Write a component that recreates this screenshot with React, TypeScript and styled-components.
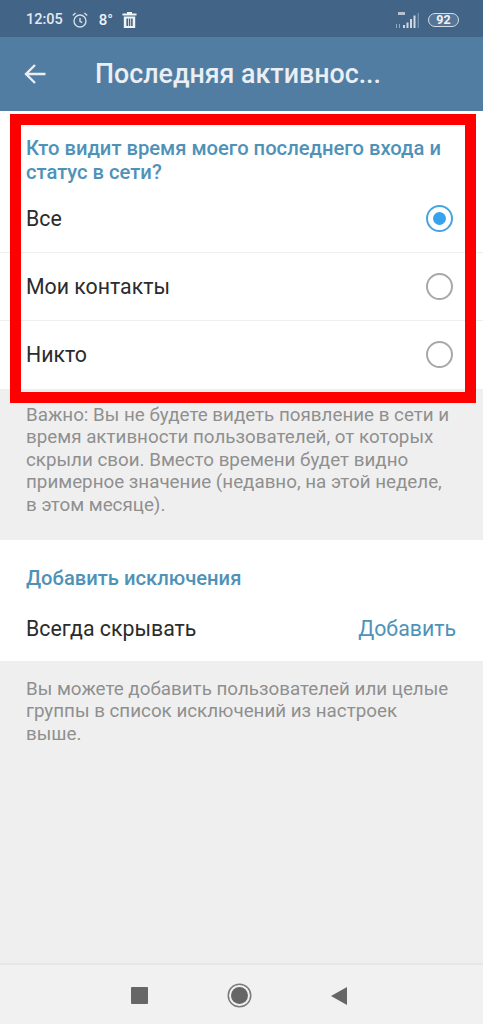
import { createGlobalStyle, styled } from "styled-components";

const GlobalStyle = createGlobalStyle`
  * { box-sizing: border-box; }
  html, body { margin: 0; padding: 0; background: #efefef; }
  body { font-family: Roboto, "Noto Sans", sans-serif; }
`;

const options = [
  { label: "Все", checked: true },
  { label: "Мои контакты", checked: false },
  { label: "Никто", checked: false },
];

const App = () => {
  return (
    <Page>
      <GlobalStyle />
      <StatusBar>
        <StatusGroup>
          <Clock>12:05</Clock>
          <svg width="18" height="18" viewBox="0 0 18 18" fill="none" stroke="#d5dde6" strokeWidth="1.4">
            <circle cx="9" cy="10" r="6" />
            <path d="M9 7v3.4l2.2 1.2M1.8 4.6 4.6 2M16.2 4.6 13.4 2" />
          </svg>
          <Temperature>8°</Temperature>
          <svg width="15" height="16" viewBox="0 0 15 16" fill="#f2f5f8">
            <path d="M5 0h5v1.6h4.5v2H.5v-2H5zM1.8 4.6h11.4V16H1.8zM4.4 6.6v7.4h1.6V6.6zM6.8 6.6v7.4h1.5V6.6zM9.1 6.6v7.4h1.6V6.6z" fillRule="evenodd" />
          </svg>
        </StatusGroup>
        <StatusGroup>
          <svg width="24" height="18" viewBox="0 0 24 18" fill="#cfd8e2">
            <rect x="2" y="1" width="7" height="3" opacity="0.8" />
            <rect x="0" y="13" width="1" height="4" opacity="0.6" />
            <rect x="3" y="13" width="1" height="4" opacity="0.6" />
            <rect x="7" y="14" width="2" height="3" />
            <rect x="10.5" y="11.5" width="2" height="5.5" />
            <rect x="14" y="8" width="2" height="9" />
            <rect x="17.5" y="4.5" width="2" height="12.5" />
            <rect x="21.5" y="2" width="1.5" height="15" opacity="0.35" />
          </svg>
          <Battery>92</Battery>
        </StatusGroup>
      </StatusBar>

      <Header>
        <svg width="22" height="22" viewBox="0 0 22 22" fill="none" stroke="#e8eef4" strokeWidth="2.4">
          <path d="M21.5 11H2M11 2 2 11l9 9" />
        </svg>
        <HeaderTitle>Последняя активнос...</HeaderTitle>
      </Header>

      <HighlightArea>
        <Section>
          <SectionTitle $wrapped>Кто видит время моего последнего входа и статус в сети?</SectionTitle>
          {options.map((option, index) => (
            <OptionRow key={option.label} $divider={index < options.length - 1}>
              <RowLabel>{option.label}</RowLabel>
              <Radio $checked={option.checked} />
            </OptionRow>
          ))}
        </Section>
        <RedFrame />
      </HighlightArea>

      <Note $height={151}>
        Важно: Вы не будете видеть появление в сети и время активности пользователей, от которых скрыли свои. Вместо времени будет видно примерное значение (недавно, на этой неделе, в этом месяце).
      </Note>

      <Section>
        <SectionTitle>Добавить исключения</SectionTitle>
        <ExceptionRow>
          <RowLabel>Всегда скрывать</RowLabel>
          <AddLink>Добавить</AddLink>
        </ExceptionRow>
      </Section>

      <Note $height={120} $top={17}>
        Вы можете добавить пользователей или целые группы в список исключений из настроек выше.
      </Note>

      <Spacer />

      <NavBar>
        <NavSquare />
        <NavCircle />
        <svg width="18" height="20" viewBox="0 0 18 20" fill="#666666">
          <path d="M17 1v18L1 10z" />
        </svg>
      </NavBar>
    </Page>
  );
};

const Page = styled.div`
  width: 483px;
  height: 1024px;
  display: flex;
  flex-direction: column;
  background-color: #efefef;
  overflow: hidden;
`;

const StatusBar = styled.div`
  height: 37px;
  flex-shrink: 0;
  padding: 2px 24px 0 26px;
  background-color: #426487;
  display: flex;
  align-items: center;
  justify-content: space-between;
`;

const StatusGroup = styled.div`
  display: flex;
  align-items: center;
  gap: 8px;
`;

const Clock = styled.span`
  font-size: 14.5px;
  font-weight: 500;
  color: #e3e9ef;
`;

const Temperature = styled.span`
  font-size: 15px;
  font-weight: 500;
  color: #eef2f6;
  margin: 0 1px 0 2px;
`;

const Battery = styled.div`
  width: 31px;
  height: 14px;
  border: 1.5px solid #d5dde6;
  border-radius: 7px;
  background-color: #567596;
  color: #eef2f6;
  font-size: 12.5px;
  font-weight: 700;
  line-height: 11px;
  text-align: center;
`;

const Header = styled.header`
  height: 74px;
  flex-shrink: 0;
  padding-left: 24px;
  background-color: #517da2;
  display: flex;
  align-items: center;
  gap: 49px;
`;

const HeaderTitle = styled.h1`
  margin: 0;
  font-size: 26.8px;
  font-weight: 500;
  color: #e9eff4;
  white-space: nowrap;
`;

const HighlightArea = styled.div`
  position: relative;
  flex-shrink: 0;
`;

const RedFrame = styled.div`
  position: absolute;
  left: 10px;
  right: 7px;
  top: 3px;
  height: 289px;
  border: 11px solid #fe0000;
`;

const Section = styled.section`
  flex-shrink: 0;
  background-color: #ffffff;
`;

const SectionTitle = styled.h2<{ $wrapped?: boolean }>`
  margin: 0;
  padding: ${({ $wrapped }) => ($wrapped ? "25px 26px 0" : "26px 26px 0")};
  height: ${({ $wrapped }) => ($wrapped ? "74px" : "63px")};
  font-size: 20.2px;
  font-weight: 500;
  line-height: 24px;
  color: #4f92b8;
`;

const OptionRow = styled.div<{ $divider: boolean }>`
  height: 68px;
  padding: 0 30px 0 26px;
  display: flex;
  align-items: center;
  justify-content: space-between;
  border-bottom: 1px solid ${({ $divider }) => ($divider ? "#eeeeee" : "transparent")};
`;

const RowLabel = styled.span`
  font-size: 21.3px;
  color: #2b2b2b;
`;

const Radio = styled.span<{ $checked: boolean }>`
  width: 27px;
  height: 27px;
  border-radius: 50%;
  border: 2.5px solid ${({ $checked }) => ($checked ? "#46a5e0" : "#a8a8a8")};
  display: flex;
  align-items: center;
  justify-content: center;

  &::after {
    content: "";
    width: 13px;
    height: 13px;
    border-radius: 50%;
    background-color: ${({ $checked }) => ($checked ? "#37a3ee" : "transparent")};
  }
`;

const ExceptionRow = styled.div`
  height: 58px;
  padding: 0 27px 8px 26px;
  display: flex;
  align-items: center;
  justify-content: space-between;
`;

const AddLink = styled.span`
  font-size: 21.3px;
  color: #4f92b8;
`;

const Note = styled.p<{ $height: number; $top?: number }>`
  margin: 0;
  height: ${({ $height }) => $height}px;
  flex-shrink: 0;
  padding: ${({ $top }) => $top ?? 15}px 26px 0;
  font-size: 18.8px;
  line-height: 22.4px;
  color: #8f8f8f;
`;

const Spacer = styled.div`
  flex: 1;
`;

const NavBar = styled.nav`
  height: 61px;
  flex-shrink: 0;
  padding: 2px 135px 0 131px;
  background-color: #f1f1f1;
  border-top: 2px solid #e6e6e6;
  display: flex;
  align-items: center;
  justify-content: space-between;
`;

const NavSquare = styled.span`
  width: 17px;
  height: 17px;
  border-radius: 1px;
  background-color: #666666;
`;

const NavCircle = styled.span`
  width: 17px;
  height: 17px;
  border-radius: 50%;
  background-color: #666666;
  box-shadow: 0 0 0 2px #f1f1f1, 0 0 0 3.5px #7a7a7a;
`;

export default App;
